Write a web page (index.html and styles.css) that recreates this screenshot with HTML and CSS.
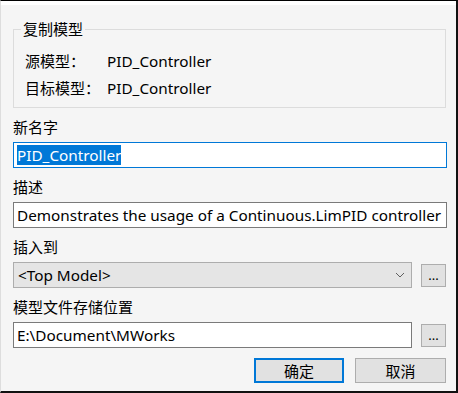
FILE: index.html
```html
<!DOCTYPE html>
<html>
<head>
  <meta charset="utf-8">
  <title>复制模型</title>
  <link rel="stylesheet" href="styles.css">
</head>
<body>
  <div class="window">
    <div class="content">
      <fieldset class="group">
        <legend>复制模型</legend>
        <div class="group-body">
          <div class="info-row"><span class="info-label">源模型：</span><span>PID_Controller</span></div>
          <div class="info-row"><span class="info-label">目标模型：</span><span>PID_Controller</span></div>
        </div>
      </fieldset>

      <div class="label">新名字</div>
      <div class="field field-focus"><span class="selected">PID_Controller</span></div>

      <div class="label">描述</div>
      <div class="field">Demonstrates the usage of a Continuous.LimPID controller</div>

      <div class="label">插入到</div>
      <div class="field-row">
        <div class="field select">
          <span>&lt;Top Model&gt;</span>
          <svg class="arrow" width="10" height="6" viewBox="0 0 10 6"><path d="M1 1 L5 5 L9 1" fill="none" stroke="#606060" stroke-width="1"/></svg>
        </div>
        <button class="browse">...</button>
      </div>

      <div class="label">模型文件存储位置</div>
      <div class="field-row">
        <div class="field">E:\Document\MWorks</div>
        <button class="browse">...</button>
      </div>

      <div class="actions">
        <button class="btn btn-default">确定</button>
        <button class="btn">取消</button>
      </div>
    </div>
  </div>
</body>
</html>
```

FILE: styles.css
```css
* {
  box-sizing: border-box;
}
body {
  margin: 0;
  background: #fff;
  font-family: "Noto Sans", "Noto Sans CJK SC", sans-serif;
  font-size: 14px;
  color: #000;
}
.window {
  width: 458px;
  height: 393px;
  border-top: 1px solid #000;
  border-right: 2px solid #111;
  border-bottom: 2px solid #111;
  border-left: 1px solid #ddd;
  background: #fff;
  padding-top: 4px;
}
.content {
  height: 100%;
  background: #f5f5f5;
  padding: 14px 9px 0 12px;
}

/* 复制模型 分组 */
.group {
  margin: 0;
  padding: 0;
  width: 433px;
  border: 1px solid #dcdcdc;
}
.group legend {
  margin-left: 7px;
  padding: 0 2px;
  line-height: 20px;
  font-size: 15px;
}
.group-body {
  padding: 12px 0 9px 11px;
  display: flex;
  flex-direction: column;
  gap: 7px;
}
.info-row {
  display: flex;
  line-height: 20px;
  font-size: 15.3px;
}
.info-label {
  width: 82px;
  font-size: 15px;
}

.label {
  margin-top: 9px;
  line-height: 20px;
  font-size: 15px;
}
.field {
  margin-top: 5px;
  height: 26px;
  width: 434px;
  border: 1px solid #7a7a7a;
  background: #fff;
  padding: 0 3px;
  display: flex;
  align-items: center;
  white-space: nowrap;
  overflow: hidden;
  font-size: 15.3px;
}
.field-focus {
  border-color: #0078d7;
}
.selected {
  background: #0078d7;
  color: #fff;
  line-height: 20px;
}
.field-row {
  margin-top: 5px;
  display: flex;
  align-items: center;
  gap: 9px;
  width: 434px;
}
.field-row .field {
  margin-top: 0;
  width: 399px;
}
.select {
  background: #e5e5e5;
  border-color: #adadad;
  justify-content: space-between;
  padding: 0 6px 0 4px;
}
.arrow {
  display: block;
}
.browse {
  width: 25px;
  height: 23px;
  border: 1px solid #adadad;
  background: #e1e1e1;
  font-family: "Noto Sans", sans-serif;
  font-size: 13px;
  padding: 0 0 4px;
  line-height: 1;
  display: flex;
  align-items: flex-end;
  justify-content: center;
}

.actions {
  margin-top: 10px;
  width: 434px;
  display: flex;
  justify-content: flex-end;
  gap: 10px;
}
.btn {
  width: 91px;
  height: 25px;
  border: 1px solid #adadad;
  background: #e1e1e1;
  font-family: "Noto Sans CJK SC", sans-serif;
  font-size: 15px;
  padding: 0;
  margin-right: 1px;
}
.btn-default {
  border: 2px solid #0078d7;
  width: 90px;
}
```
